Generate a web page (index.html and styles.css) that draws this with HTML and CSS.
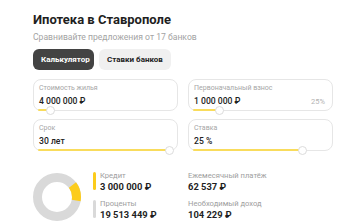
FILE: index.html
```html
<!DOCTYPE html>
<html lang="ru">
<head>
<meta charset="utf-8">
<link rel="stylesheet" href="styles.css">
</head>
<body>
<div class="page">
  <h1 class="title">Ипотека в Ставрополе</h1>
  <p class="sub">Сравнивайте предложения от 17 банков</p>
  <div class="tabs">
    <button class="tab tab-active">Калькулятор</button>
    <button class="tab">Ставки банков</button>
  </div>
  <div class="fields">
    <div class="field">
      <div class="label">Стоимость жилья</div>
      <div class="value">4 000 000 ₽</div>
      <div class="track" style="width:13px"></div>
      <div class="knob" style="left:12px"></div>
    </div>
    <div class="field">
      <div class="label">Первоначальный взнос</div>
      <div class="value-row"><span class="value">1 000 000 ₽</span><span class="pct">25%</span></div>
      <div class="track" style="width:27px"></div>
      <div class="knob" style="left:26px"></div>
    </div>
    <div class="field">
      <div class="label">Срок</div>
      <div class="value">30 лет</div>
      <div class="track" style="width:132px"></div>
      <div class="knob" style="left:131px"></div>
    </div>
    <div class="field">
      <div class="label">Ставка</div>
      <div class="value">25 %</div>
      <div class="track" style="width:110px"></div>
      <div class="knob" style="left:109px"></div>
    </div>
  </div>
  <div class="results">
    <div class="chart-col">
      <svg class="donut" width="48" height="48" viewBox="0 0 48 48">
        <circle cx="24" cy="24" r="19.5" fill="none" stroke="#d9d9d9" stroke-width="9"/>
        <circle cx="24" cy="24" r="19.5" fill="none" stroke="#fccc1c" stroke-width="9" stroke-dasharray="16.3 200" stroke-dashoffset="-17.7" transform="rotate(-90 24 24)"/>
      </svg>
      <div class="legend">
        <div class="legend-item">
          <span class="bar bar-yellow"></span>
          <div>
            <div class="r-label">Кредит</div>
            <div class="r-value">3 000 000 ₽</div>
          </div>
        </div>
        <div class="legend-item">
          <span class="bar bar-gray"></span>
          <div>
            <div class="r-label">Проценты</div>
            <div class="r-value">19 513 449 ₽</div>
          </div>
        </div>
      </div>
    </div>
    <div class="stats">
      <div class="stat">
        <div class="r-label">Ежемесячный платёж</div>
        <div class="r-value">62 537 ₽</div>
      </div>
      <div class="stat">
        <div class="r-label">Необходимый доход</div>
        <div class="r-value">104 229 ₽</div>
      </div>
    </div>
  </div>
</div>
</body>
</html>
```
FILE: styles.css
```css
* { box-sizing: border-box; }
html, body { margin: 0; padding: 0; background: #fff; }
body {
  font-family: Roboto, "Liberation Sans", Arial, sans-serif;
  color: #222;
  width: 352px;
  height: 224px;
  overflow: hidden;
}
.page {
  padding: 12px 19px 0 33px;
}
.title {
  margin: 0;
  font-size: 13px;
  line-height: 16px;
  font-weight: 700;
  color: #1f1f1f;
}
.sub {
  margin: 4px 0 0;
  font-size: 8.6px;
  line-height: 11px;
  color: #a3a3a3;
}
.tabs {
  display: flex;
  gap: 5px;
  margin-top: 6px;
}
.tab {
  font-family: inherit;
  border: 0;
  height: 21px;
  padding: 0 8px;
  border-radius: 6px;
  font-size: 8px;
  font-weight: 700;
  background: #f0f0f0;
  color: #222;
}
.tab-active {
  background: #434343;
  color: #fff;
  width: 61px;
}
.fields {
  display: grid;
  grid-template-columns: 145px 145px;
  column-gap: 10px;
  row-gap: 8px;
  margin-top: 9px;
}
.field {
  position: relative;
  height: 32px;
  border: 1px solid #e6e6e6;
  border-radius: 8px;
  padding: 4px 5px 0 5px;
}
.label {
  font-size: 7px;
  line-height: 9px;
  color: #a6a6a6;
}
.value {
  font-size: 8.6px;
  line-height: 11px;
  margin-top: 3px;
  font-weight: 500;
  color: #222;
}
.value-row {
  display: flex;
  justify-content: space-between;
  align-items: baseline;
  padding-right: 2px;
}
.value-row .value { margin-top: 3px; }
.pct {
  font-size: 7.5px;
  color: #b3b3b3;
}
.track {
  position: absolute;
  left: 4px;
  bottom: -1px;
  height: 2px;
  background: #f9dc5c;
  border-radius: 1px;
}
.knob {
  position: absolute;
  bottom: -5px;
  width: 9px;
  height: 9px;
  border-radius: 50%;
  background: #fff;
  border: 1px solid #dcdcdc;
}
.results {
  display: grid;
  grid-template-columns: 145px 145px;
  column-gap: 10px;
  margin-top: 20px;
}
.chart-col {
  display: flex;
  align-items: flex-start;
  gap: 12px;
}
.donut { flex: none; margin-top: 2px; }
.legend {
  display: flex;
  flex-direction: column;
  gap: 7px;
}
.legend-item {
  display: flex;
  gap: 4px;
}
.bar {
  width: 3px;
  height: 18px;
  border-radius: 1.5px;
  margin-top: 1px;
}
.bar-yellow { background: #fccc1c; }
.bar-gray { background: #d9d9d9; }
.r-label {
  font-size: 7.6px;
  line-height: 9px;
  color: #9e9e9e;
}
.r-value {
  font-size: 9.4px;
  line-height: 11px;
  font-weight: 700;
  color: #1f1f1f;
  margin-top: 1px;
}
.stats {
  display: flex;
  flex-direction: column;
  gap: 7px;
}
```
